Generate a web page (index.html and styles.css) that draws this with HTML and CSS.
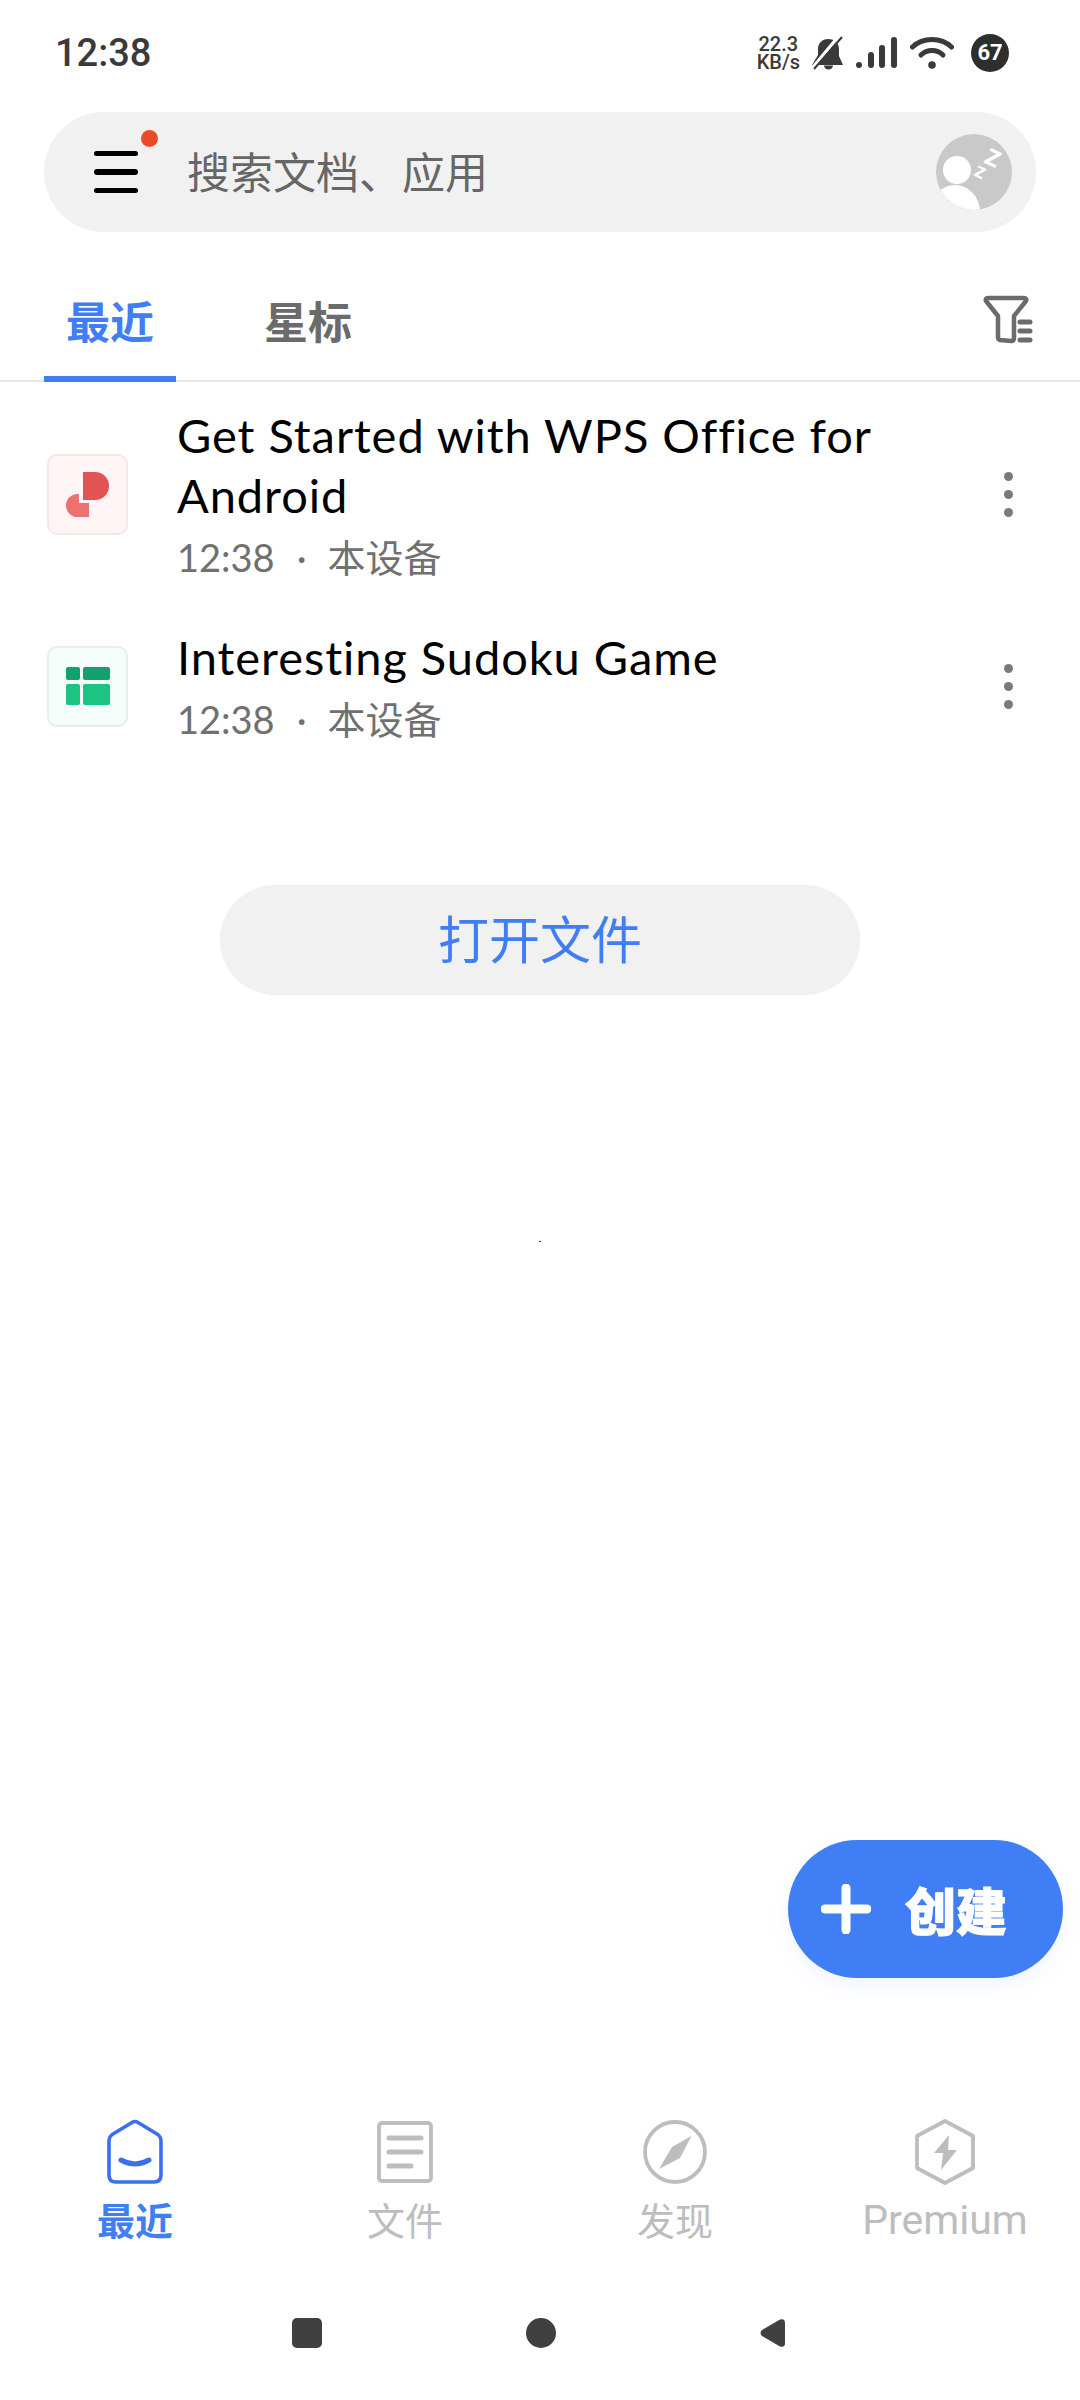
FILE: index.html

```html
<!DOCTYPE html>
<html lang="zh-CN">
<head>
  <meta charset="UTF-8" />
  <meta name="viewport" content="width=device-width, initial-scale=1" />
  <title>WPS Office</title>
  <link rel="stylesheet" href="styles.css">
</head>
<body>
  <div class="page">
    <div class="status-bar">
      <span class="clock">12:38</span>
      <div class="status-icons">
        <div class="net-speed"><span>22.3</span><span>KB/s</span></div>
        <svg class="icon-bell" width="34" height="34" viewBox="0 0 34 34">
          <path d="M17 3c-6 0-10 4.500-10 10v6L1 29h31l-4-9v-7c0-5.500-4-10-11-10z" fill="#3a3a3a"/>
          <path d="M13 29.500a4.500 4 0 0 0 9 0z" fill="#3a3a3a"/>
          <path d="M28 0L3 30" stroke="#fff" stroke-width="3.500"/>
          <path d="M31 1L3 33" stroke="#3a3a3a" stroke-width="2"/>
        </svg>
        <svg class="icon-signal" width="42" height="32" viewBox="0 0 42 32">
          <rect x="0" y="25" width="6" height="6" rx="3" fill="#3a3a3a"/>
          <rect x="12" y="15" width="6" height="16" rx="3" fill="#3a3a3a"/>
          <rect x="23" y="8" width="6" height="23" rx="3" fill="#3a3a3a"/>
          <rect x="35" y="0" width="6" height="31" rx="3" fill="#3a3a3a"/>
        </svg>
        <svg class="icon-wifi" width="44" height="34" viewBox="0 0 44 34">
          <path d="M2.500 11C13 1 31 1 41.500 11" fill="none" stroke="#3a3a3a" stroke-width="5" stroke-linecap="round"/>
          <path d="M11 19C17 13 27 13 33 19" fill="none" stroke="#3a3a3a" stroke-width="5" stroke-linecap="round"/>
          <circle cx="22" cy="29" r="3.800" fill="#3a3a3a"/>
        </svg>
        <div class="battery">67</div>
      </div>
    </div>

    <div class="search-bar">
      <div class="menu-btn">
        <span></span><span></span><span></span>
        <i class="red-dot"></i>
      </div>
      <span class="search-text">搜索文档、应用</span>
      <svg class="avatar" width="78" height="78" viewBox="0 0 78 78">
        <defs><clipPath id="avatar-clip"><circle cx="39" cy="39" r="38"/></clipPath></defs>
        <circle cx="39" cy="39" r="38" fill="#c9c9c9"/>
        <g clip-path="url(#avatar-clip)">
          <circle cx="22" cy="37" r="14" fill="#fff"/>
          <ellipse cx="20" cy="79" rx="25" ry="27" fill="#fff"/>
        </g>
        <text x="40" y="45" class="zz-small" transform="rotate(25 45 39)">z</text>
        <text x="51" y="33" class="zz-big" transform="rotate(25 58 24)">z</text>
      </svg>
    </div>

    <div class="tabs">
      <div class="tab active">最近</div>
      <div class="tab">星标</div>
      <svg class="icon-filter" width="52" height="52" viewBox="0 0 52 52" fill="none" stroke="#6b6b6b" stroke-width="4.500" stroke-linecap="round" stroke-linejoin="round">
        <path d="M3 7Q2 4 5 4H41Q44 4 43 7L31 22V44Q31 47 28 47L17 46Q15 45.500 15 43V22Z"/>
        <path d="M37 28H47M37 37H47M37 46H47" stroke-width="5"/>
      </svg>
    </div>

    <div class="file-list">
      <div class="file-row">
        <div class="file-icon pdf">
          <svg width="81" height="81" viewBox="0 0 81 81">
            <path d="M36 18H48A14 14 0 0 1 48 46H36Z" fill="#e45353"/>
            <path d="M30.500 40H32V49H42V63H30.500A11.500 11.500 0 0 1 30.500 40Z" fill="#ec7272"/>
          </svg>
        </div>
        <div class="file-info">
          <div class="file-name">Get Started with WPS Office for Android</div>
          <div class="file-meta"><span>12:38</span><span class="sep">·</span><span>本设备</span></div>
        </div>
        <div class="more"><i></i><i></i><i></i></div>
      </div>
      <div class="file-row">
        <div class="file-icon sheet">
          <svg width="81" height="81" viewBox="0 0 81 81">
            <rect x="19" y="21" width="14" height="13" rx="2" fill="#12a16b"/>
            <rect x="36" y="21" width="27" height="13" rx="2" fill="#12a16b"/>
            <rect x="19" y="38" width="14" height="21" rx="2" fill="#1cc382"/>
            <rect x="36" y="38" width="27" height="21" rx="2" fill="#1cc382"/>
          </svg>
        </div>
        <div class="file-info">
          <div class="file-name">Interesting Sudoku Game</div>
          <div class="file-meta"><span>12:38</span><span class="sep">·</span><span>本设备</span></div>
        </div>
        <div class="more"><i></i><i></i><i></i></div>
      </div>
    </div>

    <div class="open-btn">打开文件</div>
    <div class="speck"></div>

    <div class="fab">
      <svg width="50" height="50" viewBox="0 0 50 50">
        <path d="M25 4V46M4 25H46" stroke="#fff" stroke-width="9" stroke-linecap="round"/>
      </svg>
      <span>创建</span>
    </div>

    <div class="bottom-nav">
      <div class="nav-item active">
        <svg width="64" height="66" viewBox="0 0 64 66" fill="none" stroke="#3b6ff0" stroke-width="3.600" stroke-linejoin="round">
          <path d="M29 3.500Q32 1.500 35 3.500L54 15Q58 17.500 58 22V56Q58 63 51 63H13Q6 63 6 56V22Q6 17.500 10 15Z"/>
          <path d="M18 41Q32 49 46 41" stroke-width="5" stroke-linecap="round"/>
        </svg>
        <span>最近</span>
      </div>
      <div class="nav-item">
        <svg width="64" height="66" viewBox="0 0 64 66" fill="none" stroke="#bdbdbd" stroke-width="3.800">
          <rect x="6" y="4" width="52" height="58" rx="3"/>
          <path d="M16 19H48M16 33H48M16 47H38" stroke-width="5" stroke-linecap="round"/>
        </svg>
        <span>文件</span>
      </div>
      <div class="nav-item">
        <svg width="64" height="66" viewBox="0 0 64 66" fill="none" stroke="#bdbdbd" stroke-width="3.800">
          <circle cx="32" cy="33" r="30"/>
          <path d="M48.500 17L37 39 16 50 29 28Z" fill="#bdbdbd" stroke="none"/>
        </svg>
        <span>发现</span>
      </div>
      <div class="nav-item">
        <svg width="64" height="66" viewBox="0 0 64 66" fill="none" stroke="#bdbdbd" stroke-width="3.800" stroke-linejoin="round">
          <path d="M32 2L60 17V49L32 64 4 49V17Z"/>
          <path d="M36 16L21 34H30L28 51 44 31H35Z" fill="#bdbdbd" stroke="none"/>
        </svg>
        <span class="latin">Premium</span>
      </div>
    </div>

    <div class="system-nav">
      <i class="sys-square"></i>
      <i class="sys-circle"></i>
      <svg class="sys-back" width="26" height="30" viewBox="0 0 26 30">
        <path d="M2 12L20 1.500Q25 0 25 5V25Q25 30 20 28.500L2 18Q-1 15 2 12Z" fill="#404040"/>
      </svg>
    </div>
  </div>
</body>
</html>
```

FILE: styles.css

```css
* {
  margin: 0;
  padding: 0;
  box-sizing: border-box;
}

body {
  width: 1080px;
  height: 2400px;
  background-color: #fff;
  font-family: 'Lato', 'Noto Sans CJK SC', sans-serif;
  overflow: hidden;
}

.page {
  position: relative;
  height: 2400px;
  display: flex;
  flex-direction: column;
}

/* Status bar */
.status-bar {
  height: 112px;
  padding: 0 71px 6px 55px;
  display: flex;
  justify-content: space-between;
  align-items: center;
  color: #3a3a3a;
}

.clock {
  font-family: 'Roboto', sans-serif;
  font-size: 38px;
  font-weight: 500;
}

.status-icons {
  display: flex;
  align-items: center;
}

.net-speed {
  display: flex;
  flex-direction: column;
  font-family: 'Roboto', sans-serif;
  font-size: 20px;
  font-weight: 500;
  line-height: 18px;
  text-align: center;
  margin-right: 11px;
}

.icon-signal {
  margin-left: 11px;
}

.icon-wifi {
  margin-left: 12px;
}

.battery {
  width: 38px;
  height: 38px;
  margin-left: 17px;
  border-radius: 50%;
  background-color: #2e2e2e;
  color: #fff;
  font-family: 'Roboto', sans-serif;
  font-size: 22px;
  font-weight: 700;
  line-height: 38px;
  text-align: center;
}

/* Search */
.search-bar {
  height: 120px;
  margin: 0 44px;
  padding: 0 23px 0 50px;
  background-color: #f1f1f1;
  border-radius: 60px;
  display: flex;
  align-items: center;
}

.menu-btn {
  position: relative;
  width: 44px;
  display: flex;
  flex-direction: column;
  gap: 13px;
}

.menu-btn span {
  height: 5.500px;
  background-color: #000;
  border-radius: 3px;
}

.red-dot {
  position: absolute;
  top: -21px;
  right: -20px;
  width: 17px;
  height: 17px;
  border-radius: 50%;
  background-color: #eb4a26;
}

.search-text {
  flex: 1;
  margin-left: 49px;
  padding-bottom: 4px;
  font-size: 43px;
  color: #666;
}

.zz-small,
.zz-big {
  fill: #fff;
  font-family: 'Lato', sans-serif;
  font-weight: 700;
}

.zz-small {
  font-size: 22px;
}

.zz-big {
  font-size: 32px;
}

/* Tabs */
.tabs {
  height: 150px;
  padding: 0 45px 0 44px;
  display: flex;
  align-items: flex-end;
  border-bottom: 2px solid #e6e6e6;
}

.tab {
  width: 132px;
  height: 88px;
  margin-right: 66px;
  margin-bottom: -2px;
  font-size: 44px;
  font-weight: 700;
  line-height: 56px;
  text-align: center;
  color: #6b6b6b;
}

.tab.active {
  color: #407ef5;
  border-bottom: 6px solid #407ef5;
  border-radius: 6px 6px 0 0;
}

.icon-filter {
  margin-left: auto;
  margin-bottom: 34px;
}

/* Recent files */
.file-list {
  padding-top: 1px;
}

.file-row {
  display: flex;
  align-items: center;
  padding: 22px 44px 22px 47px;
}

.file-icon {
  width: 81px;
  height: 81px;
  flex-shrink: 0;
  border-radius: 10px;
  border: 2px solid;
  position: relative;
}

.file-icon svg {
  display: block;
  margin: -2px;
}

.file-icon.pdf {
  background-color: #fff5f4;
  border-color: #f7e6e5;
}

.file-icon.sheet {
  background-color: #f5fdfa;
  border-color: #e2f0ea;
}

.file-info {
  flex: 1;
  margin-left: 49px;
  min-width: 0;
}

.file-name {
  max-width: 720px;
  font-size: 47px;
  letter-spacing: 0.950px;
  line-height: 60px;
  color: #000;
}

.file-meta {
  margin-top: 6px;
  font-size: 38px;
  line-height: 52px;
  color: #707070;
}

.sep {
  margin: 0 21px 0 22px;
}

.more {
  width: 12px;
  margin-right: 20px;
  display: flex;
  flex-direction: column;
  gap: 9px;
}

.more i {
  width: 9px;
  height: 9px;
  border-radius: 50%;
  background-color: #7a7a7a;
}

/* Open file */
.open-btn {
  width: 640px;
  height: 110px;
  margin: 118px auto 0;
  background-color: #f1f1f1;
  border-radius: 55px;
  font-size: 51px;
  line-height: 110px;
  text-align: center;
  color: #407ef5;
}

.speck {
  width: 2px;
  height: 1px;
  margin: 246px auto 0;
  background-color: #333;
}

.fab {
  position: absolute;
  left: 788px;
  top: 1840px;
  width: 275px;
  height: 138px;
  padding-left: 33px;
  border-radius: 69px;
  background-color: #407ef5;
  box-shadow: 0 8px 20px rgba(64, 126, 245, 0.08);
  display: flex;
  align-items: center;
  gap: 34px;
  color: #fff;
  font-size: 51px;
  font-weight: 900;
  -webkit-text-stroke: 1px #fff;
}

/* Bottom navigation */
.bottom-nav {
  margin-top: auto;
  display: grid;
  grid-template-columns: repeat(4, 270px);
}

.nav-item {
  display: flex;
  flex-direction: column;
  align-items: center;
  font-size: 38px;
  line-height: 50px;
  color: #bdbdbd;
}

.nav-item svg {
  margin-bottom: 10px;
}

.nav-item.active {
  color: #407ef5;
  font-weight: 700;
}

.nav-item .latin {
  font-family: 'Roboto', sans-serif;
  font-size: 41px;
}

.system-nav {
  height: 155px;
  padding: 20px 294px 0 292px;
  display: flex;
  justify-content: space-between;
  align-items: center;
}

.sys-square {
  width: 30px;
  height: 30px;
  border-radius: 5px;
  background-color: #404040;
}

.sys-circle {
  width: 30px;
  height: 30px;
  border-radius: 50%;
  background-color: #404040;
}
```
